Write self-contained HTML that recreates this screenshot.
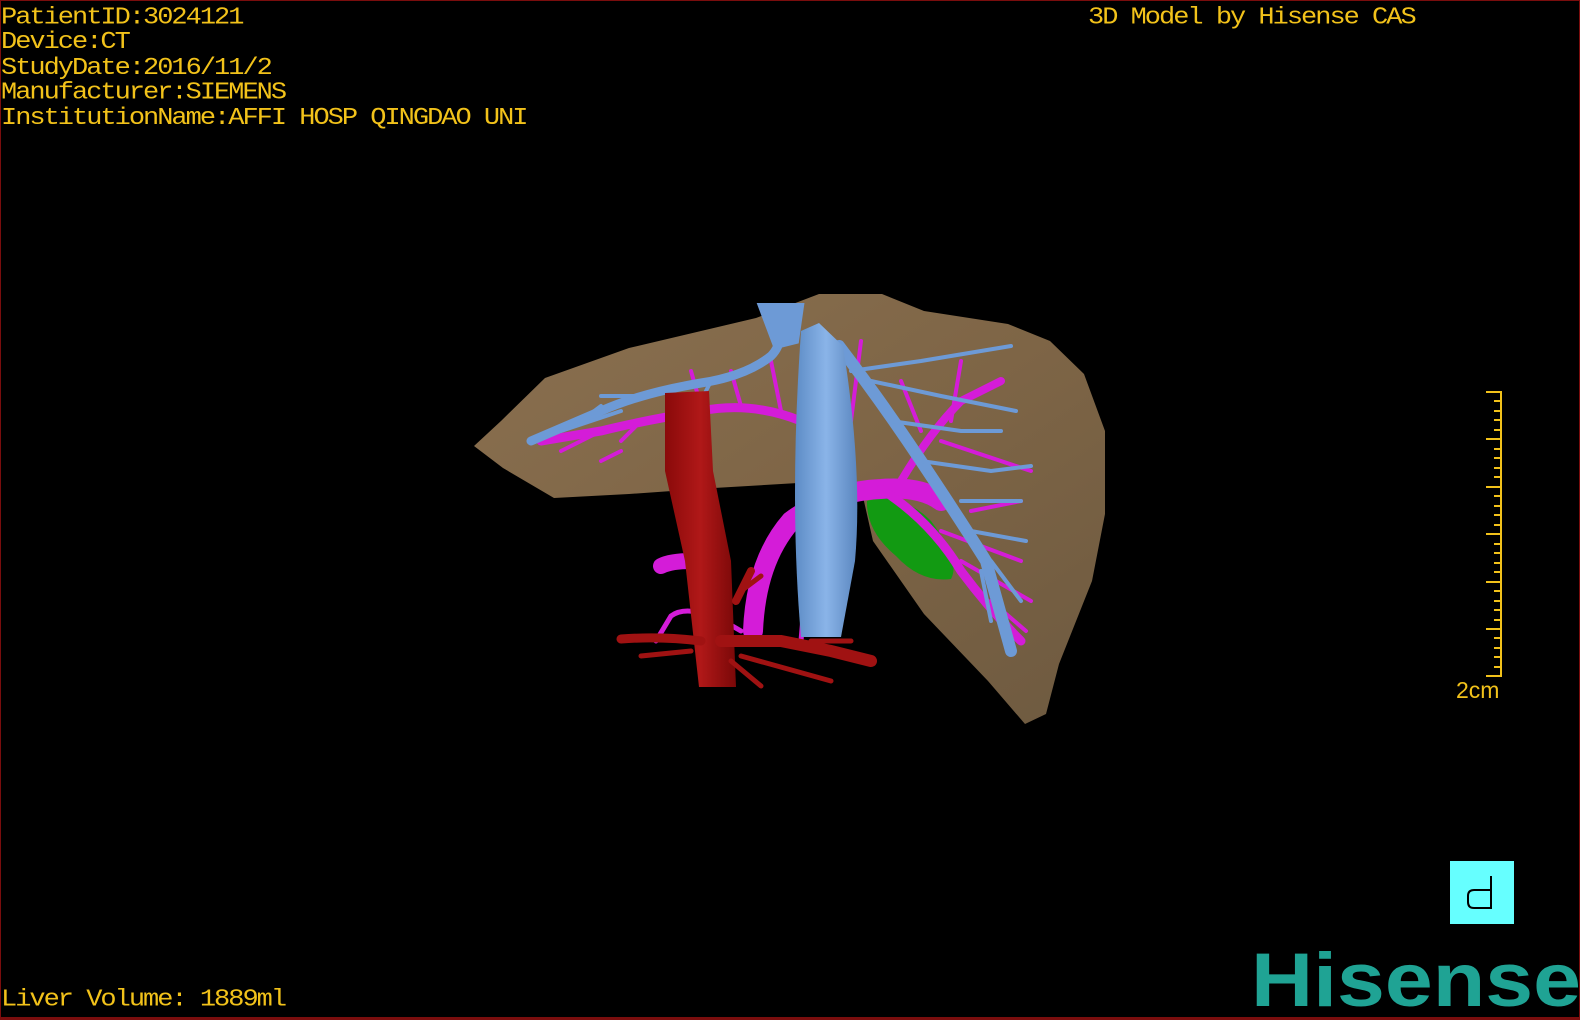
<!DOCTYPE html>
<html><head><meta charset="utf-8"><style>
html,body{margin:0;padding:0;background:#000;}
#c{position:relative;width:1580px;height:1020px;background:#000;overflow:hidden;box-sizing:border-box;border:1px solid #7a0d0d;border-bottom:3px solid #7a0d0d;}
.t{position:absolute;font-family:"Liberation Mono",monospace;color:#f2c21a;font-size:27px;letter-spacing:-2.0px;line-height:28.4px;white-space:pre;transform:scaleY(0.88);transform-origin:0 0;}
svg{position:absolute;left:0;top:0;}
</style></head><body><div id="c">
<svg width="1580" height="1020" viewBox="0 0 1580 1020">
<defs>
<linearGradient id="lv" x1="0" y1="0" x2="1" y2="1">
<stop offset="0" stop-color="#8a7050"/><stop offset="0.5" stop-color="#7e6546"/><stop offset="1" stop-color="#6e5a40"/></linearGradient>
<linearGradient id="iv" x1="0" y1="0" x2="1" y2="0">
<stop offset="0" stop-color="#5d8cc6"/><stop offset="0.5" stop-color="#8ab4e8"/><stop offset="1" stop-color="#5a86bf"/></linearGradient>
<linearGradient id="ao" x1="0" y1="0" x2="1" y2="0">
<stop offset="0" stop-color="#8a0a0a"/><stop offset="0.5" stop-color="#b01818"/><stop offset="1" stop-color="#7a0808"/></linearGradient>
</defs>
<path d="M473,445 L500,420 L544,377 L628,347 L755,317 L818,293 L881,293 L923,310 L1007,323 L1049,340 L1083,373 L1104,430 L1104,513 L1091,580 L1058,663 L1045,713 L1024,723 L987,680 L923,613 L872,540 L860,487 L797,482 L713,487 L628,493 L553,497 L502,467 Z" fill="url(#lv)"/>
<path d="M866,500 Q900,490 930,520 Q960,560 950,578 Q920,582 895,555 Q865,530 866,500 Z" fill="#129a12"/>
<g fill="none" stroke="#d41cd8" stroke-linecap="round">
<path d="M752,630 Q755,560 790,520 Q830,490 880,488 Q920,485 940,500" stroke-width="20"/>
<path d="M880,488 Q930,520 960,570 Q990,610 1020,640" stroke-width="9"/>
<path d="M900,480 Q930,430 960,400 L1000,380" stroke-width="8"/>
<path d="M940,440 L1030,470 M950,420 L960,360 M920,430 L900,380 M940,530 L1020,560 M960,560 L1030,600 M990,600 L1025,630 M970,510 L1020,500" stroke-width="4"/>
<path d="M800,420 Q750,400 700,410 Q640,420 600,430 L540,440" stroke-width="9"/>
<path d="M780,410 L770,360 M740,405 L730,370 M700,405 L690,370 M640,420 L620,440 M600,430 L560,450 M620,450 L600,460 M700,410 L690,470 M850,420 L860,340" stroke-width="4"/>
<path d="M690,560 Q670,560 660,565" stroke-width="16"/>
<path d="M740,630 Q690,600 670,615 L655,640" stroke-width="5"/>
<path d="M805,580 L800,640" stroke-width="5"/>
</g>
<g fill="none" stroke="#6d9ad6" stroke-linecap="round">
<path d="M775,315 Q785,340 770,355 Q745,375 700,382 Q640,392 600,410 L530,440" stroke-width="9"/>
<path d="M640,395 L600,395 M620,410 L560,430 M580,420 L600,405 M710,380 L700,400" stroke-width="4"/>
<path d="M838,345 Q880,400 920,460 Q960,520 985,560 L1010,650" stroke-width="12"/>
<path d="M870,380 L940,395 L1015,410 M890,420 L960,430 L1000,430 M920,460 L990,470 L1030,465 M960,500 L1020,500 M970,530 L1025,540 M990,560 L1020,600 M980,570 L990,620 M850,370 L920,360 L1010,345" stroke-width="4"/>
<path d="M760,305 L800,305 L795,340 L775,345 Z" stroke-width="6" fill="#6d9ad6"/>
</g>
<path d="M800,330 L818,322 L842,345 Q862,470 854,560 L840,636 L800,636 Q788,500 800,330 Z" fill="url(#iv)"/>
<path d="M664,392 L708,390 L712,470 L730,560 L735,686 L698,686 L684,560 L664,470 Z" fill="url(#ao)"/>
<g fill="none" stroke="#a01212" stroke-linecap="round">
<path d="M720,640 L780,640 L830,650 L870,660" stroke-width="12"/>
<path d="M700,640 Q660,635 620,638" stroke-width="9"/>
<path d="M690,650 L640,655 M730,660 L760,685 M740,655 L830,680 M760,575 L740,590 M810,640 L850,640" stroke-width="5"/>
<path d="M735,600 L750,570" stroke-width="8"/>
</g>
<g stroke="#f2c21a" stroke-width="2">
<line x1="1500" y1="390" x2="1500" y2="676"/>
<line x1="1485" y1="391" x2="1500" y2="391"/>
<line x1="1485" y1="438" x2="1500" y2="438"/>
<line x1="1485" y1="486" x2="1500" y2="486"/>
<line x1="1485" y1="533" x2="1500" y2="533"/>
<line x1="1485" y1="581" x2="1500" y2="581"/>
<line x1="1485" y1="628" x2="1500" y2="628"/>
<line x1="1485" y1="675" x2="1500" y2="675"/>
<line x1="1493" y1="400" x2="1500" y2="400"/><line x1="1493" y1="410" x2="1500" y2="410"/><line x1="1493" y1="419" x2="1500" y2="419"/><line x1="1493" y1="429" x2="1500" y2="429"/>
<line x1="1493" y1="448" x2="1500" y2="448"/><line x1="1493" y1="457" x2="1500" y2="457"/><line x1="1493" y1="467" x2="1500" y2="467"/><line x1="1493" y1="476" x2="1500" y2="476"/>
<line x1="1493" y1="495" x2="1500" y2="495"/><line x1="1493" y1="505" x2="1500" y2="505"/><line x1="1493" y1="514" x2="1500" y2="514"/><line x1="1493" y1="524" x2="1500" y2="524"/>
<line x1="1493" y1="543" x2="1500" y2="543"/><line x1="1493" y1="552" x2="1500" y2="552"/><line x1="1493" y1="562" x2="1500" y2="562"/><line x1="1493" y1="571" x2="1500" y2="571"/>
<line x1="1493" y1="590" x2="1500" y2="590"/><line x1="1493" y1="600" x2="1500" y2="600"/><line x1="1493" y1="609" x2="1500" y2="609"/><line x1="1493" y1="619" x2="1500" y2="619"/>
<line x1="1493" y1="637" x2="1500" y2="637"/><line x1="1493" y1="647" x2="1500" y2="647"/><line x1="1493" y1="656" x2="1500" y2="656"/><line x1="1493" y1="666" x2="1500" y2="666"/>
</g>
<text x="1455" y="697" font-family="Liberation Sans, sans-serif" font-size="23" fill="#f2c21a">2cm</text>
<rect x="1449" y="860" width="64" height="63" fill="#66ffff"/>
<path d="M1490,875 L1490,907 L1473,907 Q1467,907 1467,901 L1467,895 Q1467,889 1473,889 L1490,889" fill="none" stroke="#000" stroke-width="2"/>
<text x="1250" y="1005" font-family="Liberation Sans, sans-serif" font-weight="bold" font-size="76" fill="#1fa394" textLength="330" lengthAdjust="spacingAndGlyphs">Hisense</text>
</svg>
<div class="t" style="left:0;top:5px;">PatientID:3024121
Device:CT
StudyDate:2016/11/2
Manufacturer:SIEMENS
InstitutionName:AFFI HOSP QINGDAO UNI</div>
<div class="t" style="left:1087px;top:5px;">3D Model by Hisense CAS</div>
<div class="t" style="left:0;top:987px;">Liver Volume: 1889ml</div>
</div></body></html>
